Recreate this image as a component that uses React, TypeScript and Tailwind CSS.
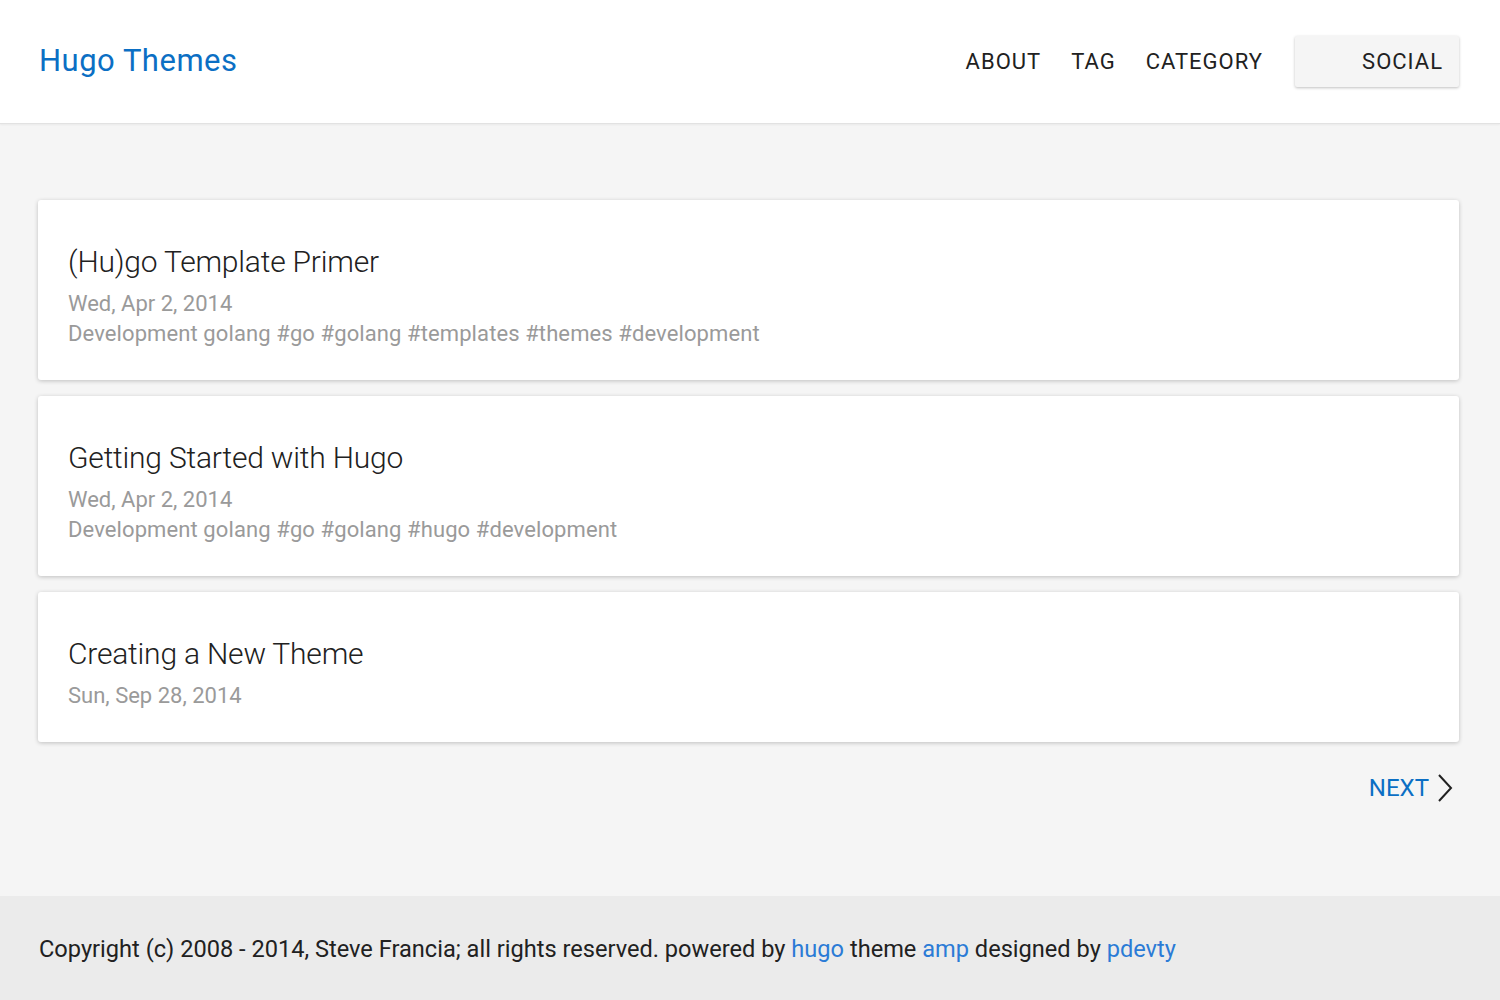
const posts = [
  {
    title: '(Hu)go Template Primer',
    date: 'Wed, Apr 2, 2014',
    tags: 'Development golang #go #golang #templates #themes #development',
  },
  {
    title: 'Getting Started with Hugo',
    date: 'Wed, Apr 2, 2014',
    tags: 'Development golang #go #golang #hugo #development',
  },
  {
    title: 'Creating a New Theme',
    date: 'Sun, Sep 28, 2014',
    tags: '',
  },
]

function PostCard({ title, date, tags }: { title: string; date: string; tags: string }) {
  return (
    <div className="bg-white rounded-[3px] shadow-[0_1px_4px_rgba(0,0,0,0.22)] px-[30px] pt-[42px] pb-[31px]">
      <h2 className="text-[30px] leading-[40px] font-light tracking-[-0.2px] text-[#212121] mb-[7px]">{title}</h2>
      <div className="text-[22px] leading-[30px] text-[#9a9a9a]">{date}</div>
      {tags && <div className="text-[22px] leading-[30px] tracking-[0.1px] text-[#9a9a9a]">{tags}</div>}
    </div>
  )
}

export default function App() {
  return (
    <div className="min-h-screen flex flex-col bg-[#f5f5f5] font-['Roboto',sans-serif]">
      <header className="bg-white h-[124px] border-b border-[#e2e2e2] shadow-[0_1px_2px_rgba(0,0,0,0.05)] flex items-center justify-between pl-[39px] pr-[41px]">
        <a className="text-[31px] text-[#0b6fc4] tracking-[0.5px] -mt-[1px]">Hugo Themes</a>
        <nav className="flex items-center">
          <a className="text-[22px] text-[#212121] tracking-[1px] mr-[30px]">ABOUT</a>
          <a className="text-[22px] text-[#212121] tracking-[1px] mr-[30px]">TAG</a>
          <a className="text-[22px] text-[#212121] tracking-[1px] mr-[32px]">CATEGORY</a>
          <button className="w-[164px] h-[51px] bg-[#f5f5f5] shadow-[0_1px_3px_rgba(0,0,0,0.25)] rounded-[2px] text-[22px] text-[#212121] tracking-[1px] text-right pr-[16px]">
            SOCIAL
          </button>
        </nav>
      </header>

      <main className="flex-1 px-[38px] pt-[76px]">
        <div className="flex flex-col gap-[16px] pr-[3px]">
          {posts.map((p) => (
            <PostCard key={p.title} {...p} />
          ))}
        </div>
        <div className="flex justify-end items-center mt-[31px] mb-[93px] pr-[8px]">
          <a className="text-[24px] leading-[30px] text-[#0b6fc4]">NEXT</a>
          <svg width="18" height="30" viewBox="0 0 18 30" className="ml-[7px]" fill="none" stroke="#212121" strokeWidth="2">
            <path d="M3 2 L15 15 L3 28" />
          </svg>
        </div>
      </main>

      <footer className="bg-[#ebebeb] h-[104px] flex items-center px-[39px]">
        <p className="text-[23.6px] text-[#212121] mt-[4px]">
          Copyright (c) 2008 - 2014, Steve Francia; all rights reserved. powered by{' '}
          <a className="text-[#2b7bd6]">hugo</a> theme <a className="text-[#2b7bd6]">amp</a> designed by{' '}
          <a className="text-[#2b7bd6]">pdevty</a>
        </p>
      </footer>
    </div>
  )
}
